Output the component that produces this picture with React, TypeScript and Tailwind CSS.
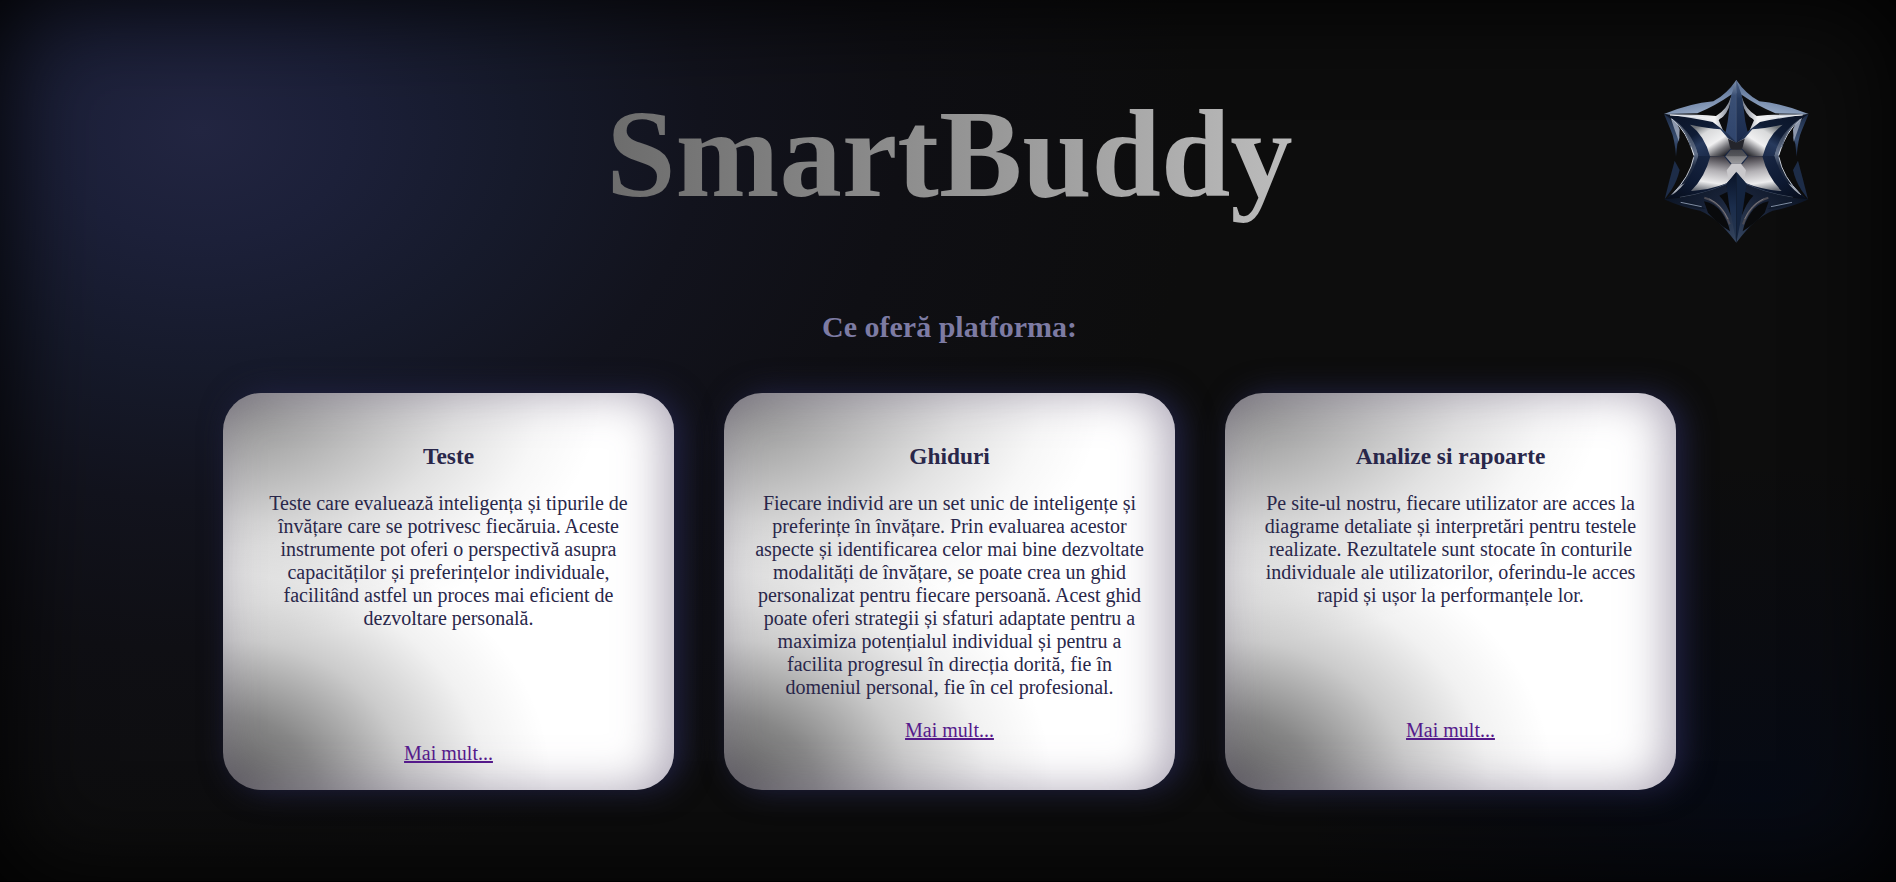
import React from "react";

const cards = [
  { title: "Teste", linkGap: "pt-28", text: "Teste care evaluează inteligența și tipurile de învățare care se potrivesc fiecăruia. Aceste instrumente pot oferi o perspectivă asupra capacităților și preferințelor individuale, facilitând astfel un proces mai eficient de dezvoltare personală." },
  { title: "Ghiduri", linkGap: "pt-5", text: "Fiecare individ are un set unic de inteligențe și preferințe în învățare. Prin evaluarea acestor aspecte și identificarea celor mai bine dezvoltate modalități de învățare, se poate crea un ghid personalizat pentru fiecare persoană. Acest ghid poate oferi strategii și sfaturi adaptate pentru a maximiza potențialul individual și pentru a facilita progresul în direcția dorită, fie în domeniul personal, fie în cel profesional." },
  { title: "Analize si rapoarte", linkGap: "pt-28", text: "Pe site-ul nostru, fiecare utilizator are acces la diagrame detaliate și interpretări pentru testele realizate. Rezultatele sunt stocate în conturile individuale ale utilizatorilor, oferindu-le acces rapid și ușor la performanțele lor." },
];

function StarHalf() {
  return (
    <g>
      {/* outer side blades */}
      <path d="M72 162 Q92 172 98 190 L119 232 L112 252 L108 290 Q104 235 92 210 Z" fill="url(#blade)" />
      <path d="M104 302 L119 330 Q112 362 94 390 L74 418 Q88 360 104 302 Z" fill="#1d2c47" />
      {/* inner side frame */}
      <path d="M78 166 Q140 185 165 245 L176 288 L165 335 Q150 385 78 418 Q132 365 151 330 L161 288 Q148 215 78 166 Z" fill="url(#frame)" />
      <path d="M92 174 Q110 182 119 208 L117 245 Q104 210 92 174 Z" fill="#8d98ad" />
      <path d="M96 176 Q142 215 162 286" stroke="#e3e6ec" strokeWidth="3" fill="none" />
      <path d="M100 178 Q140 208 153 262" stroke="#59657a" strokeWidth="4" fill="none" />
      <path d="M161 292 Q150 350 96 404" stroke="#c3c8d1" strokeWidth="3" fill="none" />
      <path d="M138 368 Q112 378 98 404 Q124 402 138 368 Z" fill="#a3a9b4" />
      {/* top wing */}
      <path d="M289 60 Q260 103 220 124 Q150 130 72 162 L172 160 Q225 138 272 105 L289 100 Z" fill="url(#wing)" />
      <path d="M74 163 Q170 162 228 168 Q262 148 272 112 L275 124 Q264 170 238 178 L252 215 L206 187 Z" fill="url(#silver)" />
      <path d="M190 160 Q240 140 272 109 Q264 140 228 164 Z" fill="#090a0c" />
      <path d="M272 126 L267 190 L250 212 L236 181 Q262 166 272 126 Z" fill="#0b0c10" />
      {/* upper body */}
      <path d="M74 163 Q160 174 218 186 L258 217 L289 248 L289 290 L176 289 Q156 205 74 163 Z" fill="url(#body)" />
      <path d="M150 194 Q205 205 241 208 L264 235 L289 248 L268 270 L252 289 L210 289 Q195 228 150 194 Z" fill="url(#petal)" />
      <path d="M90 165 Q165 169 228 177" stroke="#f1f2f5" strokeWidth="3" fill="none" />
      {/* lower body */}
      <path d="M175 288 L289 288 L289 340 L260 378 Q180 405 74 419 Q146 382 175 288 Z" fill="url(#lowerBody)" />
      <path d="M211 289 L252 289 L270 311 L289 311 L289 337 L260 370 Q210 390 153 393 Q195 352 211 289 Z" fill="url(#lowerPetal)" />
      <path d="M120 412 Q210 398 260 371" stroke="#5e6b82" strokeWidth="2" fill="none" />
      {/* lower wing */}
      <path d="M72 418 Q164 412 258 374 L278 440 L289 548 Q258 508 240 492 Q212 465 180 452 Q130 444 72 418 Z" fill="url(#lowerWing)" />
      <path d="M192 424 Q226 430 246 459 Q264 484 270 514 Q230 488 204 458 Z" fill="#090a0c" />
      <path d="M238 407 L266 394 L272 466 Q260 430 238 407 Z" fill="#090a0c" />
      <path d="M193 413 Q247 428 269 493" stroke="#4c4b54" strokeWidth="6" fill="none" />
      <path d="M208 417 Q244 434 264 477" stroke="#8b8990" strokeWidth="2" fill="none" />
      <path d="M118 425 Q160 422 196 447 Q152 446 118 425 Z" fill="#101a2b" />
      <path d="M122 427 L185 440" stroke="#7f8ca2" strokeWidth="3" />
    </g>
  );
}

function StarLogo() {
  return (
    <svg viewBox="0 0 570 600" className="h-[200px] w-[190px]" aria-hidden="true">
      <defs>
        <linearGradient id="wing" x1="0" y1="0" x2="0.4" y2="1">
          <stop offset="0" stopColor="#b5c0d0" /><stop offset="0.5" stopColor="#60769a" /><stop offset="1" stopColor="#93a6c2" />
        </linearGradient>
        <linearGradient id="blade" x1="0" y1="0" x2="0" y2="1">
          <stop offset="0" stopColor="#1b2a45" /><stop offset="0.6" stopColor="#3b5072" /><stop offset="1" stopColor="#172540" />
        </linearGradient>
        <linearGradient id="frame" x1="0" y1="0" x2="0" y2="1">
          <stop offset="0" stopColor="#121a2b" /><stop offset="0.45" stopColor="#65738c" /><stop offset="0.6" stopColor="#232f46" /><stop offset="1" stopColor="#0a1223" />
        </linearGradient>
        <linearGradient id="silver" x1="0" y1="0" x2="1" y2="0">
          <stop offset="0" stopColor="#7f90ab" /><stop offset="0.5" stopColor="#dfe2e7" /><stop offset="0.75" stopColor="#f4f4f5" /><stop offset="1" stopColor="#6d7585" />
        </linearGradient>
        <linearGradient id="body" x1="0" y1="0" x2="1" y2="1">
          <stop offset="0" stopColor="#0a1326" /><stop offset="0.45" stopColor="#0f1c35" /><stop offset="0.6" stopColor="#273a5d" /><stop offset="1" stopColor="#101c38" />
        </linearGradient>
        <linearGradient id="petal" x1="0.1" y1="0.1" x2="0.85" y2="0.9">
          <stop offset="0" stopColor="#6c7176" /><stop offset="0.25" stopColor="#d9dadb" /><stop offset="0.58" stopColor="#f0f0f1" /><stop offset="0.8" stopColor="#77777c" /><stop offset="1" stopColor="#1c1d23" />
        </linearGradient>
        <linearGradient id="lowerBody" x1="1" y1="0" x2="0" y2="1">
          <stop offset="0" stopColor="#1c2b49" /><stop offset="0.6" stopColor="#0e1a33" /><stop offset="1" stopColor="#050b18" />
        </linearGradient>
        <linearGradient id="lowerPetal" x1="0.55" y1="0" x2="0.35" y2="1">
          <stop offset="0" stopColor="#3f3c43" /><stop offset="0.4" stopColor="#b2b0b4" /><stop offset="0.75" stopColor="#ededee" /><stop offset="1" stopColor="#6f737b" />
        </linearGradient>
        <linearGradient id="lowerWing" x1="0" y1="0" x2="1" y2="1">
          <stop offset="0" stopColor="#07101f" /><stop offset="0.5" stopColor="#182237" /><stop offset="1" stopColor="#354661" />
        </linearGradient>
        <linearGradient id="spike" x1="0" y1="0" x2="0" y2="1">
          <stop offset="0" stopColor="#8b9ab0" /><stop offset="0.25" stopColor="#3a4f74" /><stop offset="1" stopColor="#2f446c" />
        </linearGradient>
        <linearGradient id="spikeRight" x1="0" y1="0" x2="0" y2="1">
          <stop offset="0" stopColor="#50658a" /><stop offset="0.3" stopColor="#263a5d" /><stop offset="1" stopColor="#1b2b4d" />
        </linearGradient>
        <linearGradient id="spikeDown" x1="0" y1="0" x2="0" y2="1">
          <stop offset="0" stopColor="#091327" /><stop offset="0.5" stopColor="#1b2d4c" /><stop offset="1" stopColor="#27374f" />
        </linearGradient>
        <linearGradient id="core" x1="0" y1="0" x2="0" y2="1">
          <stop offset="0" stopColor="#46474d" /><stop offset="0.45" stopColor="#55565b" /><stop offset="0.5" stopColor="#7d7d81" /><stop offset="1" stopColor="#9b9b9e" />
        </linearGradient>
      </defs>
      <StarHalf />
      <g transform="translate(578 0) scale(-1 1)"><StarHalf /></g>
      <path d="M289 248 L264 236 L270 262 L275 269 L303 269 L308 262 L314 236 Z" fill="#24252c" />
      <path d="M272 269 L306 269 L322 289 L303 311 L275 311 L256 289 Z" fill="url(#core)" />
      <path d="M275 311 L303 311 L318 331 L312 362 L289 337 L266 362 L260 331 Z" fill="#c9c8cb" />
      <path d="M289 60 L273 108 L263 185 L257 216 L289 248 Z" fill="url(#spike)" />
      <path d="M289 60 L306 108 L316 185 L323 216 L289 248 Z" fill="url(#spikeRight)" />
      <path d="M289 335 L259 372 L268 440 L289 548 Z" fill="url(#spikeDown)" />
      <path d="M289 335 L320 372 L310 440 L289 548 Z" fill="#14243f" />
      <path d="M289 60 L289 246" stroke="#586d92" strokeWidth="1.5" />
    </svg>
  );
}

export default function App() {
  return (
    <main className="h-[882px] w-full overflow-hidden border-b border-black bg-[#0d0d0d] bg-[radial-gradient(ellipse_460px_340px_at_1760px_800px,#060a14_0%,#080a1299_50%,#0d0d0d00_100%),radial-gradient(ellipse_1000px_740px_at_200px_130px,#222541_0%,#1c2039_15%,#161a2b_32%,#12131d_50%,#0f0f14_70%,#0d0d0d_100%)] pl-[3px] font-['Liberation_Serif',serif] text-[20px] leading-[23px] text-[#29274a] shadow-[inset_0_0_100px_#000]">
      <header className="grid h-[260px] grid-cols-[1fr_auto_1fr]">
        <h1 className="col-start-2 bg-linear-to-r from-[#6c6c6c] to-[#bcbcbc] bg-clip-text pt-[82px] text-[124.8px] leading-[144px] font-bold text-transparent">SmartBuddy</h1>
        <div className="justify-self-end pt-[60px] pr-[66px]"><StarLogo /></div>
      </header>
      <h2 className="pt-11 text-center text-[30px] leading-[46px] font-bold text-[#7d7ba3]">Ce oferă platforma:</h2>
      <div className="flex justify-center gap-[50px] pt-[43px]">
        {cards.map((c) => (
          <section key={c.title} className="h-[397px] w-[451px] rounded-[38px] bg-white bg-[radial-gradient(ellipse_330px_270px_at_0%_100%,#000000a4_0%,#00000078_28%,#00000034_56%,#0000000e_80%,#00000000_100%),radial-gradient(ellipse_380px_250px_at_0%_0%,#00000078_0%,#0000004a_32%,#0000001e_62%,#00000008_84%,#00000000_100%)] px-[30px] pt-[50px] text-center shadow-[8px_0_30px_#212244,inset_-10px_0_46px_#6b607c88]">
            <h3 className="text-[23.4px] leading-[27px] font-bold">{c.title}</h3>
            <p className="pt-[22px]">{c.text}</p>
            <div className={c.linkGap}><a href="#" className="text-[#551a8b] underline decoration-2">Mai mult...</a></div>
          </section>
        ))}
      </div>
    </main>
  );
}
